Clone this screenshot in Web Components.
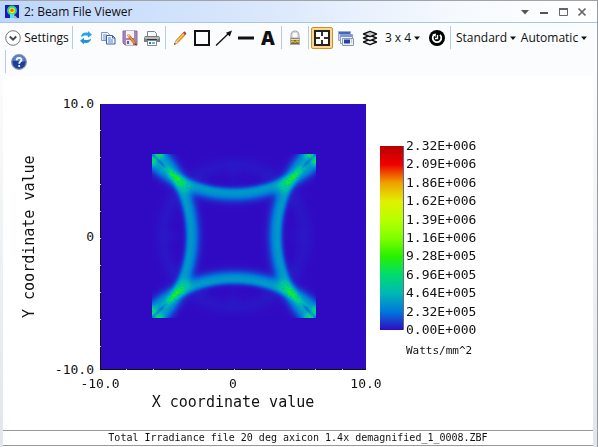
<!DOCTYPE html>
<html lang="en">
<head>
<meta charset="utf-8">
<title>Beam File Viewer</title>
<style>
html{height:100%}
body{margin:0;min-height:100%;display:flex;background:#fff;font:12px/16px "Open Sans","Noto Sans",sans-serif;color:#111}
beam-window{flex:1;min-width:0}
</style>
</head>
<body>
<beam-window></beam-window>
<script>
const ICONS = {
app:[14,'<rect width="14" height="13" fill="#2018b8"/><ellipse cx="7" cy="5.5" rx="5" ry="5" fill="#12c8e0"/><ellipse cx="7" cy="5.5" rx="4" ry="4" fill="#38e828"/><ellipse cx="7" cy="5.5" rx="2.8" ry="2.8" fill="#f8f020"/><ellipse cx="7" cy="5.2" rx="1.7" ry="1.8" fill="#f06048"/><path d="M5 9h4v4H5z" fill="#50e0f0"/><path d="M9 11l3 3" stroke="#b8bcc4" stroke-width="2"/>'],
chev:[16,'<circle cx="8" cy="8" r="7.3" fill="#fff" stroke="#777" stroke-width="1"/><path d="M4.8 6.5L8 9.7l3.2-3.2" fill="none" stroke="#444" stroke-width="1.9"/>'],
refresh:[16,'<path d="M3 7c.3-3.600 3-5 7-4.300V1l4 3.700-4 3V5.800C7 5 5.500 5.500 3 7z" fill="#2ba3e0"/><path d="M13 8.500c-.3 3.600-3 5-7 4.300V14.500l-4-3.700 4-3v1.900c3 .8 4.500.3 7-1.200z" fill="#2491d6"/>'],
copy:[16,'<path d="M1.500 2.500h6l2 2v6h-8z" fill="#eef4fc" stroke="#8095bb"/><path d="M3 5h4M3 7h4M3 9h3" stroke="#6f95d0"/><path d="M6.500 5.500h6l2.500 2.500v6H6.500z" fill="#f2f7ff" stroke="#3d5f9e"/><path d="M8 8h3M8 10h5M8 12h5" stroke="#4e85d3"/><path d="M12.500 5.500V8H15" fill="none" stroke="#3d5f9e"/>'],
save:[16,'<path d="M1 1h14v14H3l-2-2z" fill="#a685bd" stroke="#8a6b9f"/><path d="M4 1h8v7H4z" fill="#f4f1f7"/><path d="M4 10h7v5H4z" fill="#e9e5ed"/><path d="M5 11h2v3H5z" fill="#775a8c"/><path d="M6.500 4l7 8 1 3-3-1.500-6-8z" fill="#ef9b22" stroke="#a65611" stroke-width=".7"/><path d="M5.500 5.500l1-1.500 1.200 1.500-1.200 1.300z" fill="#f6dc9d"/><path d="M13.400 13.200l1.500 2.300-2.300-1.300z" fill="#333"/>'],
print:[16,'<path d="M3.500 1.500h7l2 2V7h-9z" fill="#f8fafc" stroke="#7c8289"/><path d="M1 6h14l1 2v4H0V8z" fill="#777c83"/><path d="M1 7h14v2H1z" fill="#b5babf"/><path d="M3 9h10v2H3z" fill="#34383e"/><path d="M3.500 10.500h9v5h-9z" fill="#fff" stroke="#888"/><path d="M5 12h2v2H5z" fill="#2878c0"/><path d="M8 12h3v2H8z" fill="#69b9d8"/><path d="M13 9h1v1h-1z" fill="#57d46d"/>'],
pencil:[16,'<path d="M4 10.500l7.500-8 2 2-7.500 8-3.500 2z" fill="#f4a52a" stroke="#b6711c" stroke-width=".8"/><path d="M5 11l7.500-8" stroke="#ffd976" stroke-width="1"/><path d="M11 3l1.500-1.700 2 2L13 5z" fill="#c73b35"/><path d="M4 10.500l2 2-3.800 2z" fill="#e8d6b8"/><path d="M2 14.800l.7-2 1.200 1.100z" fill="#333"/>'],
rect:[18,'<rect x="2" y="2" width="14" height="14" fill="none" stroke="#111" stroke-width="2"/>'],
arrow:[18,'<path d="M1 16.500L13.500 4.500" stroke="#111" stroke-width="1.300"/><path d="M17 1.500l-2.200 6-3.900-3.800z" fill="#111"/>'],
line:[18,'<path d="M1 9h16" stroke="#111" stroke-width="3"/>'],
lock:[16,'<path d="M4.500 8V5a3.500 3.500 0 0 1 7 0v3" fill="none" stroke="#a9acb0" stroke-width="2"/><path d="M5 8V5a3 3 0 0 1 6 0v3" fill="none" stroke="#e7e9eb" stroke-width=".8"/><rect x="3.500" y="8" width="9" height="6.500" fill="#6c6753" stroke="#aaa"/><path d="M4 9h8v1H4z" fill="#e5dfb0"/><path d="M4 11l2-1 2 2 2-2 2 1v2l-2-1-2 1-2-1-2 1z" fill="#e2b72a"/>'],
target:[18,'<rect x="2" y="2" width="14" height="14" fill="#fffdf6" stroke="#222" stroke-width="2"/><path d="M9 3v4M9 11v4M3 9h4M11 9h4" stroke="#333" stroke-width="2"/>'],
windows:[18,'<path d="M1.500 2.500h12v9h-12z" fill="#c3d2f1" stroke="#9aaace"/><path d="M2 3h11v2H2z" fill="#4064c8"/><path d="M3.500 5.500h12v9h-12z" fill="#eef2fa" stroke="#929fba"/><path d="M4 6h11v2H4z" fill="#7b94dc"/><path d="M5.500 9.500h11v7h-11z" fill="#edf1f5" stroke="#8c98aa"/><path d="M7 10.500h6v4H7z" fill="#243fae"/><path d="M14 11h1M14 13h1" stroke="#9da8b8"/>'],
layers:[18,'<g fill="#fafcfd" stroke="#111" stroke-width="1.400" stroke-linejoin="round"><path d="M2.500 13l6.500-2.700 6.500 2.700L9 15.700z"/><path d="M2.500 9L9 6.300 15.500 9 9 11.700z"/><path d="M2.500 5L9 2.300 15.500 5 9 7.700z"/></g><path d="M6 5h6M7.500 4h3M7.500 6h3" stroke="#888" stroke-width=".5"/>'],
clock:[18,'<circle cx="9" cy="9" r="8" fill="#000"/><path d="M6 5.800a4.300 4.300 0 1 0 6 0" fill="none" stroke="#fff" stroke-width="1.800"/><path d="M4.300 5.200l3.700-.7-.4 3.600z" fill="#fff"/><path d="M9.500 6v3.500H7" fill="none" stroke="#fff" stroke-width="1.400"/>'],
help:[16,'<circle cx="8" cy="8" r="7.300" fill="#1d3f97" stroke="#8691a5" stroke-width="1.300"/><path d="M2 7a6 6 0 0 1 12 0c-3 2-8-1-12 0z" fill="#5b84d6"/><path d="M5.700 6.200c0-3.200 4.900-3 4.700-.3C10.300 7.600 8.200 7.700 8.200 9.700" fill="none" stroke="#fff" stroke-width="1.800"/><circle cx="8.200" cy="12" r="1.100" fill="#fff"/>'],
caret:[10,'<path d="M2 3.500h6L5 7z" fill="#111"/>'],
menu:[16,'<path d="M4 6h8l-4 4.500z" fill="#555"/>'],
min:[16,'<path d="M4 9h8" stroke="#555" stroke-width="2"/>'],
max:[16,'<path d="M4.500 5.500h8v6h-8z" fill="none" stroke="#666"/><path d="M4 5h9" stroke="#666" stroke-width="2"/>'],
close:[16,'<path d="M4.500 4.500l7 7m0-7l-7 7" stroke="#666" stroke-width="1.700"/>']
};
function define(name, html, ready){
  const t=document.createElement('template'); t.innerHTML=html;
  customElements.define(name, class extends HTMLElement{
    constructor(){super();this.attachShadow({mode:'open'}).append(t.content.cloneNode(true));}
    connectedCallback(){if(ready)ready(this,this.shadowRoot);}
  });
}
define('ui-icon','<style>:host{display:inline-flex;flex:none}svg{display:block}</style><svg aria-hidden="true"></svg>',(h,r)=>{
  const [s,m]=ICONS[h.getAttribute('name')], v=r.querySelector('svg');
  v.setAttribute('viewBox',`0 0 ${s} ${s}`);v.setAttribute('width',s);v.setAttribute('height',s);v.innerHTML=m;
});
define('tool-button',`<style>
:host{display:block;flex:none;min-width:22px}
button{width:100%;height:22px;box-sizing:border-box;border:1px solid transparent;border-radius:2px;background:none;padding:0;margin:0;font:inherit;color:inherit;display:flex;align-items:center;justify-content:center;gap:3px;white-space:nowrap}
:host([pressed]) button{border-color:#c8952c;background:#ffd58c}
:host([menu]) button{gap:1px}
</style><button type="button"><slot></slot></button>`,(h,r)=>{
  const b=r.querySelector('button');if(h.hasAttribute('label'))b.setAttribute('aria-label',h.getAttribute('label'));
  if(h.hasAttribute('menu'))b.setAttribute('aria-haspopup','menu');
  if(h.hasAttribute('pressed'))b.setAttribute('aria-pressed','true');
});
define('tool-group','<style>:host{display:flex;align-items:center;height:23px;border-left:1px solid #b4cbe0;padding:0 2px;box-sizing:border-box}:host([first]){border:0;padding:0 3px 0 0}</style><slot></slot>');
define('title-bar',`<style>
:host{display:flex;align-items:center;height:21px;padding:0 7px 0 5px;border-bottom:1px solid #a9c6df;background:linear-gradient(90deg,#bdd6fb,#dbe8fc 45%,#f5f9fe 75%,#fff)}
h1{flex:1;margin:0 0 0 5px;font:inherit}
nav{display:flex;gap:3px}
button{border:0;background:none;padding:0;width:16px;height:18px;display:flex;align-items:center}
</style><ui-icon name="app"></ui-icon><h1><slot></slot></h1><nav>
<button type="button" aria-label="Window menu"><ui-icon name="menu"></ui-icon></button><button type="button" aria-label="Minimize"><ui-icon name="min"></ui-icon></button><button type="button" aria-label="Maximize"><ui-icon name="max"></ui-icon></button><button type="button" aria-label="Close"><ui-icon name="close"></ui-icon></button></nav>`);
define('tool-bar',`<style>
:host{display:flex;flex-wrap:wrap;row-gap:1px;padding:3px 2px 3px 5px;background:#fafcfd}
.a{font:800 19px/20px "Open Sans",sans-serif}
.set{width:64px}.grid{width:41px}.std{width:66px}.auto{width:70px}
.draw{padding-left:3px}.view{gap:2px}.scale{padding:0 0 0 3px}
</style>
<tool-group first><tool-button class="set"><ui-icon name="chev"></ui-icon><span>Settings</span></tool-button></tool-group>
<tool-group><tool-button label="Refresh"><ui-icon name="refresh"></ui-icon></tool-button><tool-button label="Copy"><ui-icon name="copy"></ui-icon></tool-button><tool-button label="Save"><ui-icon name="save"></ui-icon></tool-button><tool-button label="Print"><ui-icon name="print"></ui-icon></tool-button></tool-group>
<tool-group class="draw"><tool-button label="Pencil"><ui-icon name="pencil"></ui-icon></tool-button><tool-button label="Rectangle"><ui-icon name="rect"></ui-icon></tool-button><tool-button label="Arrow"><ui-icon name="arrow"></ui-icon></tool-button><tool-button label="Line"><ui-icon name="line"></ui-icon></tool-button><tool-button><span class="a">A</span></tool-button></tool-group>
<tool-group><tool-button label="Lock"><ui-icon name="lock"></ui-icon></tool-button></tool-group>
<tool-group class="view"><tool-button pressed label="Fit"><ui-icon name="target"></ui-icon></tool-button><tool-button label="Windows"><ui-icon name="windows"></ui-icon></tool-button><tool-button label="Layers"><ui-icon name="layers"></ui-icon></tool-button><tool-button menu class="grid"><span>3 x 4</span><ui-icon name="caret"></ui-icon></tool-button><tool-button label="Reset"><ui-icon name="clock"></ui-icon></tool-button></tool-group>
<tool-group class="scale"><tool-button menu class="std"><span>Standard</span><ui-icon name="caret"></ui-icon></tool-button><tool-button menu class="auto"><span>Automatic</span><ui-icon name="caret"></ui-icon></tool-button></tool-group>
<tool-group><tool-button label="Help"><ui-icon name="help"></ui-icon></tool-button></tool-group>`);

const MAP=[[48,10,195],[0,120,220],[0,184,180],[0,220,110],[40,240,0],[128,255,0],[184,255,0],[224,240,0],[240,160,0],[240,0,0],[184,0,0]];
function colour(v){
  const t=Math.max(0,Math.min(.999,v))*10,i=Math.floor(t),f=t-i;
  return MAP[i].map((c,k)=>c+(MAP[i+1][k]-c)*f);
}
define('irradiance-map','<style>:host{display:block;aspect-ratio:1;background:#300ac3}canvas{display:block;width:100%;height:100%;image-rendering:pixelated}</style><canvas width="265" height="265" role="img" aria-label="Irradiance"></canvas>',(h,r)=>{
  const c=r.querySelector('canvas').getContext('2d'),im=c.createImageData(265,265);
  let seed=7;const rnd=()=>(seed=(seed*16807)%2147483647)/2147483647;
  // One bright arc: steep on the side of its centre of curvature, soft on the other.
  const band=(a,b)=>{const d=Math.hypot(a,164-b)-120.5,w=d<0?3.4:6;
    return .15*Math.exp(-Math.pow(Math.abs(d)/(1.35*w),2.2));};
  for(let y=0;y<265;y++)for(let x=0;x<265;x++){
    const dx=x-132.5,dy=y-131.5,ax=Math.abs(dx),ay=Math.abs(dy);let v=0;
    if(ax<82&&ay<82){
      const t=band(ax,ay),l=band(ay,ax),q=Math.hypot(dx,dy),an=Math.atan2(dy,dx);
      v=t+l;
      const s=(ax+ay)/2,diag=Math.abs(ax-ay);
      v+=.06*Math.exp(-((s-58)**2)/40-diag*diag/12);
      if(s>66)v*=1-.45*Math.exp(-diag*diag/3)*Math.min(1,(s-66)/6);
      v+=.17*Math.exp(-((ax-75)**2+(ay-82)**2)/18)+.17*Math.exp(-((ax-82)**2+(ay-75)**2)/18);
      v*=1+(rnd()-.5)*(v>.2?.4:.04);
      v+=.010*Math.exp(-((q-71)**2)/60);
      if(q>48)v+=.004*Math.max(0,Math.cos(an*12))*Math.exp(-((q-62)**2)/150);
    }
    const p=colour(v),i=(y*265+x)*4;im.data[i]=p[0];im.data[i+1]=p[1];im.data[i+2]=p[2];im.data[i+3]=255;
  }
  c.putImageData(im,0,0);
});
define('colour-scale',`<style>
:host{display:grid;grid-template-columns:24px auto;column-gap:2px;font-size:13px}
.bar{margin:8px 0;box-sizing:border-box;border-right:1px solid #668;background:linear-gradient(#b80000,#f00000 10%,#f0a000 20%,#e0f000 30%,#b8ff00 40%,#80ff00 50%,#28f000 60%,#00dc6e 70%,#00b8b4 80%,#0078dc 90%,#300ac3)}
ol{list-style:none;margin:0;padding:0;display:flex;flex-direction:column;justify-content:space-between;height:200px}
li{line-height:16px}p{grid-column:2;margin:5px 0 0;font-size:11px;line-height:16px}
</style><div class="bar"></div><ol></ol><p>Watts/mm^2</p>`,(h,r)=>{
  r.querySelector('ol').innerHTML=h.getAttribute('values').split(' ').map(v=>`<li>${v}</li>`).join('');
});
define('beam-plot',`<style>
:host{display:grid;grid-template-columns:20px 61px minmax(160px,1fr) 14px 213px;padding:28px 0 0 16px;font:13px/16px "DejaVu Sans Mono",monospace;background:#fff;flex:1;align-content:start}
.yt{writing-mode:vertical-rl;transform:rotate(180deg);text-align:center;font-size:15px;line-height:20px}
.y{display:flex;flex-direction:column;justify-content:space-between;text-align:right;margin:-8px 6px -8px 0}
.axes{padding:0 0 1px 1px;background:
 repeating-linear-gradient(#111 0 26px,#bbb 26px 27px) 0 0/1px 100% no-repeat,
 repeating-linear-gradient(90deg,#111 0 26px,#bbb 26px 27px) 0 100%/100% 1px no-repeat}
.x{grid-column:3;display:flex;justify-content:space-between;margin:6px -20px 0}
.x span{width:40px;text-align:center}
.xt{grid-column:3;text-align:center;font-size:15px;line-height:20px}
colour-scale{grid-column:5;grid-row:1;margin-top:34px;align-self:start}
</style>
<div class="yt">Y coordinate value</div><div class="y"><span>10.0</span><span>0</span><span>-10.0</span></div>
<div class="axes"><irradiance-map></irradiance-map></div>
<colour-scale values="2.32E+006 2.09E+006 1.86E+006 1.62E+006 1.39E+006 1.16E+006 9.28E+005 6.96E+005 4.64E+005 2.32E+005 0.00E+000"></colour-scale>
<div class="x"><span>-10.0</span><span>0</span><span>10.0</span></div><div class="xt">X coordinate value</div>`);
define('beam-window',`<style>
:host{display:flex;flex-direction:column;border-top:1px solid #a0a3a8;border-right:1px solid #999ca2;box-sizing:border-box;background:linear-gradient(#fafcfd 75px,#e2e5e9)}
main{flex:1;display:flex;flex-direction:column;margin:0 4px 0 3px;background:#fff}
footer{border:solid #999;border-width:1px 0;text-align:center;font:10px/14px "DejaVu Sans Mono",monospace;margin-bottom:1px}
</style><title-bar>2: Beam File Viewer</title-bar><tool-bar></tool-bar><main><beam-plot></beam-plot><footer>Total Irradiance file 20 deg axicon 1.4x demagnified_1_0008.ZBF</footer></main>`);
</script>
</body>
</html>
